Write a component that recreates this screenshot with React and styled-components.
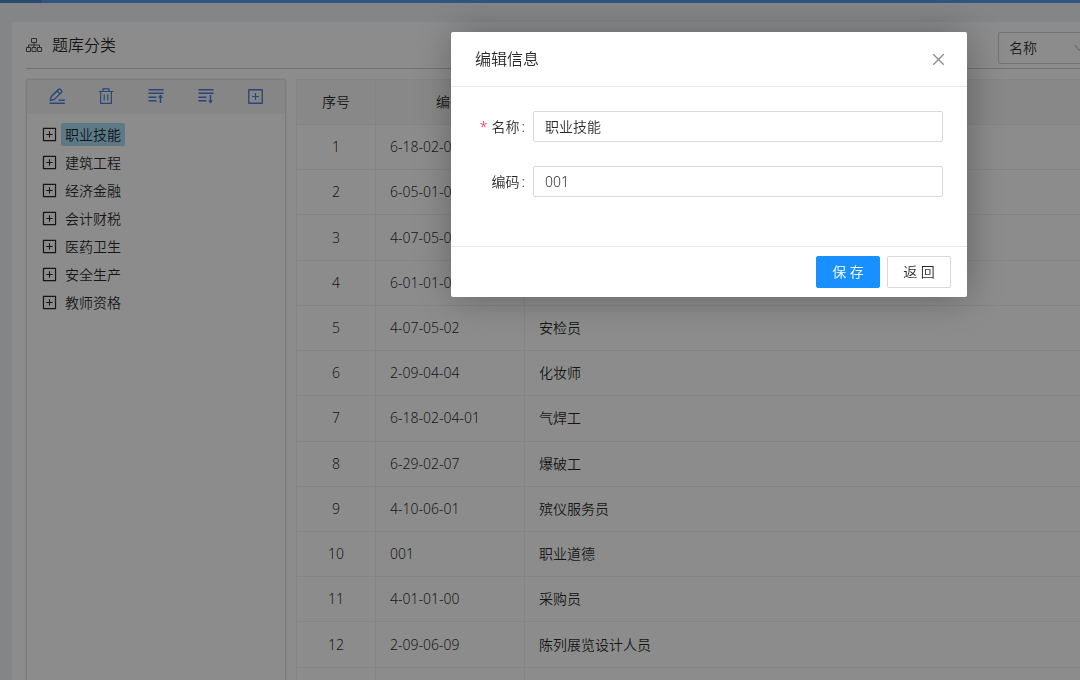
import React, { useState } from "react";
import styled, { createGlobalStyle } from "styled-components";
import {
  AiOutlineClose,
  AiOutlineDown,
  AiOutlinePlusSquare,
} from "react-icons/ai";

const categories = [
  "职业技能",
  "建筑工程",
  "经济金融",
  "会计财税",
  "医药卫生",
  "安全生产",
  "教师资格",
];

const rows = [
  { code: "6-18-02-04", name: "" },
  { code: "6-05-01-01", name: "" },
  { code: "4-07-05-01", name: "" },
  { code: "6-01-01-01", name: "" },
  { code: "4-07-05-02", name: "安检员" },
  { code: "2-09-04-04", name: "化妆师" },
  { code: "6-18-02-04-01", name: "气焊工" },
  { code: "6-29-02-07", name: "爆破工" },
  { code: "4-10-06-01", name: "殡仪服务员" },
  { code: "001", name: "职业道德" },
  { code: "4-01-01-00", name: "采购员" },
  { code: "2-09-06-09", name: "陈列展览设计人员" },
];

const TreeIcon = () => (
  <svg width="16" height="16" viewBox="0 0 16 16" fill="none" stroke="#555">
    <path d="M5.5 1.5h5v4h-5zM.5 10.5h4v4h-4zM6 10.5h4v4H6zM11.5 10.5h4v4h-4zM8 5.5v5M2.5 10.5V8h11v2.5" />
  </svg>
);

const PencilIcon = () => (
  <svg width="16" height="16" viewBox="0 0 16 16" fill="none" stroke="currentColor" strokeWidth="1.4">
    <path d="M1.4 12.3l.8-3.6 7.3-7.3q.9-.7 1.8 0l1.2 1.2q.7.9 0 1.8l-7.4 7.3zM8 3l3 3" />
    <path d="M.5 15.2h15.3M9.5 12.3h6.3" />
  </svg>
);

const TrashIcon = () => (
  <svg width="16" height="16" viewBox="0 0 16 16" fill="none" stroke="currentColor" strokeWidth="1.2">
    <path d="M.6 3.5h14.8M5 3.5V.8h6v2.7M2.6 3.5v11.9h10.8V3.5M6.2 6.2v6.4M9.8 6.2v6.4" />
  </svg>
);

const SortIcon = ({ down }) => (
  <svg width="16" height="16" viewBox="0 0 16 16" fill="none" stroke="currentColor" strokeWidth="1.5">
    <path d="M.5 1.8h15M.5 5.2h15M.5 9.2h8M.5 12.8h8M12.5 7v8" />
    <path
      d={down ? "M12.5 15.4l-2.2-3.2h4.4z" : "M9.8 9.8l2.7-3 2.7 3z"}
      fill="currentColor"
      stroke="none"
    />
  </svg>
);

const App = () => {
  const [selected, setSelected] = useState(categories[0]);
  const [modalActive, setModalActive] = useState(true);
  const [name, setName] = useState("职业技能");
  const [code, setCode] = useState("001");

  const closeModal = () => setModalActive(false);

  return (
    <>
      <GlobalStyle />
      <Page>
        <TopBar />
        <Panel>
          <PanelHeader>
            <PanelTitle>
              <TreeIcon />
              题库分类
            </PanelTitle>
            <SelectWrap>
              <select aria-label="名称">
                <option>名称</option>
              </select>
              <AiOutlineDown />
            </SelectWrap>
          </PanelHeader>
          <Content>
            <TreeCard>
              <Toolbar>
                <ToolButton aria-label="编辑">
                  <PencilIcon />
                </ToolButton>
                <ToolButton aria-label="删除">
                  <TrashIcon />
                </ToolButton>
                <ToolButton aria-label="上移">
                  <SortIcon />
                </ToolButton>
                <ToolButton aria-label="下移">
                  <SortIcon down />
                </ToolButton>
                <ToolButton aria-label="添加">
                  <AiOutlinePlusSquare />
                </ToolButton>
              </Toolbar>
              <Tree>
                {categories.map((item) => (
                  <TreeItem key={item}>
                    <AiOutlinePlusSquare />
                    <TreeLabel
                      $active={item === selected}
                      onClick={() => setSelected(item)}
                    >
                      {item}
                    </TreeLabel>
                  </TreeItem>
                ))}
              </Tree>
            </TreeCard>
            <Table>
              <thead>
                <tr>
                  <Th $width="79px">序号</Th>
                  <Th $width="149px">编码</Th>
                  <Th>名称</Th>
                </tr>
              </thead>
              <tbody>
                {rows.map((row, i) => (
                  <tr key={i}>
                    <Td $center>{i + 1}</Td>
                    <Td>{row.code}</Td>
                    <Td>{row.name}</Td>
                  </tr>
                ))}
                <tr>
                  <Td />
                  <Td />
                  <Td />
                </tr>
              </tbody>
            </Table>
          </Content>
        </Panel>
      </Page>
      {modalActive && (
        <Overlay>
          <Modal role="dialog" aria-labelledby="modal-title">
            <ModalHeader>
              <h2 id="modal-title">编辑信息</h2>
              <CloseButton aria-label="关闭" onClick={closeModal}>
                <AiOutlineClose />
              </CloseButton>
            </ModalHeader>
            <ModalBody>
              <Field>
                <Label htmlFor="name">
                  <Required>*</Required>名称
                </Label>
                <Input
                  id="name"
                  value={name}
                  onChange={(e) => setName(e.target.value)}
                />
              </Field>
              <Field>
                <Label htmlFor="code">编码</Label>
                <Input
                  id="code"
                  value={code}
                  onChange={(e) => setCode(e.target.value)}
                />
              </Field>
            </ModalBody>
            <ModalFooter>
              <Button $primary onClick={closeModal}>
                保 存
              </Button>
              <Button onClick={closeModal}>返 回</Button>
            </ModalFooter>
          </Modal>
        </Overlay>
      )}
    </>
  );
};

export default App;

const GlobalStyle = createGlobalStyle`
  * {
    box-sizing: border-box;
  }
  body {
    margin: 0;
    overflow: hidden;
    background: #f0f2f5;
    color: rgba(0, 0, 0, 0.85);
    font: 350 14px/22px "Noto Sans", "Noto Sans CJK SC", sans-serif;
  }
  button, input, select {
    font: inherit;
    color: inherit;
  }
  svg {
    display: block;
  }
`;

const Page = styled.div`
  min-width: 1120px;
`;

const TopBar = styled.div`
  height: 3px;
  background: linear-gradient(to right, #4a86cc 42px, #5a9cea 42px);
`;

const Panel = styled.main`
  margin: 19px 12px 0;
  padding: 10px 14px 0;
  background: #fff;
`;

const PanelHeader = styled.header`
  display: flex;
  justify-content: space-between;
  align-items: flex-start;
  padding-bottom: 4px;
  border-bottom: 1px solid #d0d0d0;
`;

const PanelTitle = styled.h1`
  display: flex;
  align-items: center;
  gap: 10px;
  margin: 0;
  font-size: 16px;
  font-weight: inherit;
  line-height: 26px;
`;

const SelectWrap = styled.div`
  position: relative;
  width: 96px;
  select {
    width: 100%;
    height: 32px;
    padding: 0 10px;
    border: 1px solid #d0d0d0;
    border-radius: 2px;
    background: #fff;
    appearance: none;
  }
  svg {
    position: absolute;
    top: 10px;
    right: 9px;
    font-size: 12px;
    color: #bfbfbf;
    pointer-events: none;
  }
`;

const Content = styled.div`
  display: flex;
  align-items: stretch;
  gap: 10px;
  padding-top: 10px;
`;

const TreeCard = styled.aside`
  flex: 0 0 260px;
  border: 1px solid #e2e2e2;
  border-radius: 2px;
  box-shadow: 0 0 2px rgba(0, 0, 0, 0.15);
`;

const Toolbar = styled.div`
  display: flex;
  padding: 0 5px 2px;
  background: #f5f5f5;
`;

const ToolButton = styled.button`
  display: flex;
  flex: 1;
  align-items: center;
  justify-content: center;
  height: 32px;
  padding: 0;
  border: 0;
  background: none;
  font-size: 19px;
  color: #4a80dc;
`;

const Tree = styled.ul`
  margin: 0;
  padding: 6px 14px;
  list-style: none;
`;

const TreeItem = styled.li`
  display: flex;
  align-items: center;
  gap: 3px;
  height: 28px;
  svg {
    font-size: 17px;
  }
`;

const TreeLabel = styled.button`
  padding: 0 4px;
  border: 0;
  border-radius: 2px;
  line-height: 23px;
  background: ${({ $active }) => ($active ? "#a9dcf5" : "none")};
`;

const Table = styled.table`
  flex: 1;
  height: calc(100vh - 46px);
  border-spacing: 0;
  border-left: 1px solid #f0f0f0;
  border-top: 1px solid #f0f0f0;
  table-layout: fixed;
`;

const Th = styled.th`
  width: ${({ $width }) => $width || "auto"};
  height: 45px;
  padding: 0 14px;
  border-right: 1px solid #f0f0f0;
  border-bottom: 1px solid #f0f0f0;
  background: #f7f7f7;
  font-weight: inherit;
`;

const Td = styled.td`
  height: 45px;
  padding: 0 14px;
  border-right: 1px solid #f0f0f0;
  border-bottom: 1px solid #f0f0f0;
  text-align: ${({ $center }) => ($center ? "center" : "left")};
`;

const Overlay = styled.div`
  position: fixed;
  inset: 0;
  display: flex;
  justify-content: flex-end;
  align-items: flex-start;
  padding: 32px 113px 0 0;
  background: rgba(0, 0, 0, 0.45);
`;

const Modal = styled.section`
  width: 516px;
  border-radius: 2px;
  background: #fff;
  box-shadow: 1px 1px 40px rgba(0, 0, 0, 0.3);
`;

const ModalHeader = styled.header`
  display: flex;
  justify-content: space-between;
  align-items: center;
  padding: 16px 20px 16px 24px;
  border-bottom: 1px solid #e8e8e8;
  h2 {
    margin: 0;
    font-size: 16px;
    font-weight: inherit;
    line-height: 22px;
  }
`;

const CloseButton = styled.button`
  padding: 0;
  border: 0;
  background: none;
  font-size: 17px;
  color: #8c8c8c;
`;

const ModalBody = styled.div`
  display: flex;
  flex-direction: column;
  gap: 24px;
  padding: 24px 24px 49px;
`;

const Field = styled.div`
  display: flex;
  align-items: center;
`;

const Label = styled.label`
  flex: 0 0 58px;
  text-align: right;
  &::after {
    content: ":";
    margin: 0 8px 0 2px;
  }
`;

const Required = styled.span`
  margin-right: 4px;
  color: #f5222d;
`;

const Input = styled.input`
  flex: 1;
  min-width: 0;
  height: 31px;
  padding: 0 11px 1px;
  border: 1px solid #d9d9d9;
  border-radius: 2px;
  background: #fff;
`;

const ModalFooter = styled.footer`
  display: flex;
  justify-content: flex-end;
  gap: 7px;
  padding: 9px 16px;
  border-top: 1px solid #e8e8e8;
`;

const Button = styled.button`
  width: 64px;
  height: 32px;
  padding: 0;
  border: 1px solid ${({ $primary }) => ($primary ? "#1890ff" : "#d9d9d9")};
  border-radius: 2px;
  background: ${({ $primary }) => ($primary ? "#1890ff" : "#fff")};
  color: ${({ $primary }) => ($primary ? "#fff" : "inherit")};
`;
